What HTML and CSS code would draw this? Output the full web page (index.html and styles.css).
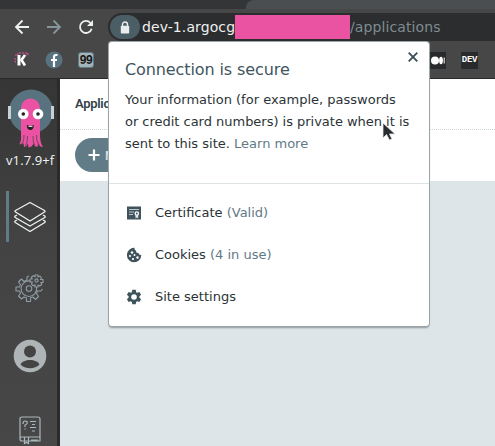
FILE: index.html
```html
<!DOCTYPE html>
<html lang="en">
<head>
<meta charset="utf-8">
<title>Applications</title>
<link rel="stylesheet" href="styles.css">
</head>
<body>
<div class="browser">
  <div class="tabs"><div class="tab-rest"></div></div>
  <header class="toolbar">
    <nav class="nav">
      <svg width="16" height="16" viewBox="0 0 16 16" class="light"><path d="M15 8H2M8.500 1.500L2 8l6.500 6.500"/></svg>
      <svg width="16" height="16" viewBox="0 0 16 16" class="dim"><path d="M1 8h13M7.500 1.500L14 8l-6.500 6.500"/></svg>
      <svg width="16" height="16" viewBox="0 0 16 16" class="light"><path d="M12.500 4A6 6 0 1 0 13.700 9.800"/><path class="solid" d="M15 1v6H9z"/></svg>
    </nav>
    <div class="omnibox">
      <span class="lock"><svg width="10" height="13" viewBox="0 0 10 13"><path d="M2.500 5V3.500a2.500 2.500 0 0 1 5 0V5" fill="none" stroke="#e9edee" stroke-width="1.400"/><rect x=".8" y="4.800" width="8.400" height="7.700" rx=".8" fill="#e9edee"/></svg></span>
      <span class="host">dev-1.argocg</span><span class="redacted"></span><span class="path">/applications</span>
    </div>
  </header>
  <div class="bookmarks">
    <svg width="16" height="16" viewBox="0 0 16 16"><path d="M1 3h3V1h10v2h-2M1 6v4h2" fill="none" stroke="#ec52a3" stroke-width="1" stroke-dasharray="2 1"/><path d="M5 3v10.500" stroke="#fff" stroke-width="3"/><path d="M11 3L7.500 8l3.500 5.500" stroke="#fff" stroke-width="2.600" fill="none"/></svg>
    <svg width="18" height="18" viewBox="0 0 18 18"><circle cx="9" cy="9" r="8.500" fill="#58737f"/><path d="M12.500 4H11Q9 4 9 6v10M6 9h6" fill="none" stroke="#fff" stroke-width="2.200"/></svg>
    <span class="badge">99</span>
    <span class="spacer"></span>
    <svg class="medium" width="16" height="17" viewBox="0 0 16 17"><path fill="#292a2b" d="M0 0h16v17H0z"/><circle cx="5" cy="8.500" r="4" fill="#fff"/><ellipse cx="11" cy="8.500" rx="1.900" ry="3.700" fill="#fff"/><path d="M14.200 5.500v6" stroke="#fff"/></svg>
    <span class="dev">DEV</span>
  </div>
</div>

<div class="app">
  <aside class="sidebar">
    <svg class="logo" width="48" height="62" viewBox="0 0 48 62">
      <circle cx="24" cy="23.500" r="22" fill="#58737f"/>
      <path d="M1 18h3v13H1zM44 18h3v13h-3z" fill="#c9d1d3"/>
      <path d="M14 21C14 7 33 7 33 21v26q0 8 3 12-4 0-5-4l-.5 4q-4-1-4-4-1 4-5 4.500l-.5-4q-1 3-4 3.500l-.5-4q-2 2-4 1 2-3 1.500-9z" fill="#ec52a3"/>
      <path d="M17 47q0 8-3 9M20.500 48q0 8-2 10M26 48q0 8 2 9M29.500 47q0 8 3 10" fill="none" stroke="#56424c" stroke-width=".8"/>
      <circle cx="16.300" cy="26" r="5.300" fill="#fff"/><circle cx="31" cy="26" r="5.300" fill="#fff"/>
      <circle cx="16.300" cy="26" r="1.800" fill="#222"/><circle cx="31" cy="26" r="1.800" fill="#222"/>
      <path d="M19.800 37q3.500 1.500 7 0 0 5-3.500 5t-3.500-5" fill="#222"/><path d="M21.500 38.300h4" stroke="#fff"/>
    </svg>
    <div class="version">v1.7.9+f</div>
    <div class="side-item active">
      <svg width="32" height="32" viewBox="0 0 32 32" fill="none" stroke="#eef2f3" stroke-width="1.300" stroke-linejoin="round"><path d="M16 1.500l14.500 8q1 1 0 1.500L16 20 1.500 11q-1-.8 0-1.500zM3 14l-1.800 1q-.7.800 0 1.500L16 25l14.800-8.500q.7-.8 0-1.500L29 14M3 19l-1.800 1q-.7.800 0 1.500L16 30.500l14.800-9q.7-.8 0-1.500L29 19"/></svg>
    </div>
    <div class="side-item gears">
      <svg width="30" height="30" viewBox="0 0 30 30" fill="none" stroke="#8f9ea4" stroke-width="1.100" stroke-linejoin="round"><path d="M14 3l-2 1v3L9 8.500 6.500 6 3.500 9l2 2.500L4.500 14H1v4h3.500l1 2.500-2 2.500 3 3L9 24l2.500 1v3.500h4V25l2.500-1 2.500 2.500 3-3-2-3 1-2.500H26l1.500-2"/><circle cx="14" cy="15.500" r="2.800"/><path d="M16 8.200a7.800 7.800 0 1 0 5.500 6"/><path d="M20 2h3v2l2-1 1.500 2-1 1.500H28v3h-2.200l1 2-2 1.500-1.800-1v2h-3v-2.200l-2 1-1.500-2 1-1.800H15v-3h2.300l-1-1.700 2-1.500 1.700 1z"/><circle cx="21.500" cy="7.500" r="1.600"/></svg>
    </div>
    <div class="side-item user">
      <svg width="34" height="34" viewBox="0 0 34 34"><circle cx="17" cy="17" r="16.300" fill="#afb5b7"/><circle cx="17" cy="12.500" r="6" fill="#444"/><path d="M7.500 25.500C10 19.500 24 19.500 26.500 25.500 22 30.500 12 30.500 7.500 25.500" fill="#444"/></svg>
    </div>
    <div class="side-item docs">
      <svg width="22" height="29" viewBox="0 0 22 29" fill="none" stroke="#aab7bc" stroke-width="1.200"><path d="M3 1h16q2 0 2 2v22H3q-2 0-2-2V3q0-2 2-2zM1 23q0-2 2-2h18M5.500 21v6.500l2-1 2 1V21M12 24h7"/><path d="M4 8q0-3 2-3 2.500 0 2.200 2Q8 8.500 6 9v2M6 12.500v1M11 5.500h6M13 8.500h3M11 11.500h6M13 15h3"/></svg>
    </div>
  </aside>
  <main class="content">
    <div class="crumb">Applic</div>
    <div class="actions"><button class="new"><svg width="12" height="12" viewBox="0 0 12 12"><path d="M6 .5v11M.5 6h11" stroke="#fff" stroke-width="2.200"/></svg><span>N</span></button></div>
  </main>
</div>

<section class="popup">
  <svg class="close" width="10" height="10" viewBox="0 0 10 10"><path d="M.7.7l8.600 8.600M9.300.7L.7 9.300" stroke="#3c5059" stroke-width="1.900"/></svg>
  <div class="summary">
    <h1>Connection is secure</h1>
    <p>Your information (for example, passwords<br><span class="tight">or credit card numbers) is private when it is</span><br>sent to this site. <a>Learn more</a></p>
  </div>
  <ul class="rows">
    <li><svg width="16" height="16" viewBox="0 0 16 16"><path d="M1 1.500h14v13H1z" fill="#3f535c"/><path d="M3 4.500h10M3 7h5M3 9.500h4" stroke="#b9c5ca" stroke-width="1"/><circle cx="10.800" cy="8.500" r="2.300" fill="#fff"/><path d="M9.500 10h2.700v3.500l-1.300-1-1.400 1z" fill="#dfe6e9"/><circle cx="10.800" cy="8.500" r="1" fill="#3f535c"/></svg><span>Certificate <em>(Valid)</em></span></li>
    <li><svg width="16" height="16" viewBox="0 0 16 16"><path d="M8.500.8A7.200 7.200 0 1 0 15.300 8q-2.500.3-2.800-2-2.800.3-2.500-2.300Q8 3 8.500.8z" fill="#3f535c"/><g fill="#fff"><circle cx="6" cy="5.500" r="1.200"/><circle cx="4" cy="9" r="1.100"/><circle cx="8.500" cy="8" r="1"/><circle cx="7" cy="12" r="1.100"/><circle cx="11.500" cy="10.500" r="1.200"/></g></svg><span>Cookies <em>(4 in use)</em></span></li>
    <li><svg width="16" height="16" viewBox="0 0 16 16"><g fill="#3f535c"><circle cx="8" cy="8" r="5.300"/><path id="tooth" d="M6.300.8h3.400l.6 3H5.700zM6.300 15.200h3.400l.6-3H5.700z"/><use href="#tooth" transform="rotate(60 8 8)"/><use href="#tooth" transform="rotate(120 8 8)"/></g><circle cx="8" cy="8" r="2.800" fill="#fff"/></svg><span>Site settings</span></li>
  </ul>
</section>
<svg class="cursor" width="14" height="20" viewBox="0 0 14 20"><path d="M1 1v15l3.500-3.500L7.500 18l2.500-1-2.500-5H13z" fill="#292c2e" stroke="#e4eaec" stroke-width=".8"/></svg>
</body>
</html>
```
FILE: styles.css
```css
* { box-sizing: border-box; }
body { margin: 0; width: 495px; height: 446px; overflow: hidden; position: relative; font-family: "DejaVu Sans", sans-serif; background: #dde5e8; }
svg { display: block; flex: none; }
.browser { height: 79px; background: #474747; border-bottom: 1px solid #2a2a2a; }
.tabs { height: 9px; background: #343536; display: flex; justify-content: flex-end; }
.tab-rest { width: 249px; background: #4b4e50; border-top-left-radius: 8px; }
.toolbar { height: 36px; display: flex; align-items: center; }
.nav { width: 108px; display: flex; gap: 16px; padding-left: 14px; }
.nav path { fill: none; stroke-width: 1.8; }
.light path { stroke: #edf1f2; }
.dim path { stroke: #87969c; }
.nav .solid { fill: #edf1f2; stroke: none; }
.omnibox { flex: 1; height: 28px; background: #2c2d2e; border-radius: 14px 0 0 14px; display: flex; align-items: center; font-size: 14px; white-space: nowrap; }
.lock { width: 30px; height: 24px; margin: 0 2px; border-radius: 12px; background: #4b5d65; display: flex; align-items: center; justify-content: center; flex: none; }
.host { width: 93px; color: #eef0f1; letter-spacing: .1px; }
.redacted { width: 115px; height: 24px; background: #ea52a2; flex: none; }
.path { color: #7f8c92; letter-spacing: .1px; }
.bookmarks { height: 32px; display: flex; align-items: center; padding: 0 17px 2px 14px; gap: 15px; }
.badge { width: 16px; height: 16px; border-radius: 3px; background: #a3b4bb; border: 1px solid #607984; color: #171717; font: bold 12px/14px "Liberation Sans", sans-serif; text-align: center; letter-spacing: -.3px; }
.spacer { flex: 1; }
.dev { width: 17px; height: 17px; background: #292a2b; color: #fff; font: bold 9px/17px "Liberation Mono", monospace; text-align: center; letter-spacing: -.3px; }
.app { display: flex; height: 367px; }
.sidebar { width: 60px; background: linear-gradient(#353536, #434343 45%, #474747); border-right: 3px solid #2b2b2b; }
.logo { margin: 9px 0 0 7px; }
.version { color: #f2f4f4; font: 13px/16px "Open Sans", sans-serif; letter-spacing: .1px; padding-left: 6px; margin-top: 2px; white-space: nowrap; }
.side-item { display: flex; justify-content: center; align-items: center; width: 60px; }
.active { height: 51px; margin-top: 23px; border-left: 3px solid #607c88; margin-left: 6px; width: 54px; padding-right: 9px; }
.gears { height: 30px; margin-top: 31px; }
.user { height: 34px; margin-top: 36px; }
.docs { height: 29px; margin-top: 43px; }
.content { flex: 1; }
.crumb { height: 51px; background: #fff; border-bottom: 1px dotted #cbd6da; padding: 16px 15px; font: 600 13px/18px Roboto, sans-serif; color: #34434a; letter-spacing: -.3px; }
.actions { height: 51px; background: #fff; padding: 8px 15px; }
.new { height: 34px; width: 60px; border: 0; border-radius: 17px; background: #617c87; color: #dce4e7; padding: 0 13px; display: flex; align-items: center; gap: 5px; font: 500 13px Roboto, sans-serif; }
.popup { position: absolute; left: 109px; top: 42px; width: 320px; height: 284px; background: #fff; border-radius: 3px; box-shadow: 0 0 0 1px #9ba4a7, 0 2px 2px #8d989c; color: #2c3336; }
.close { position: absolute; left: 299px; top: 10px; }
.summary { height: 142px; border-bottom: 1px solid #dde3e5; padding: 17px 16px 0; }
h1 { margin: 0; font-size: 16px; line-height: 22px; font-weight: 400; color: #40555e; letter-spacing: -.1px; }
p { margin: 8px 0 0; font-size: 13px; line-height: 22px; white-space: nowrap; }
.tight { letter-spacing: -.02px; }
a, em { color: #5f7a85; font-style: normal; }
.rows { list-style: none; margin: 0; padding: 8px 17px; font-size: 13px; }
.rows li { display: flex; align-items: center; height: 42px; gap: 13px; }
.rows span { padding-bottom: 2px; }
.cursor { position: absolute; left: 382px; top: 122px; }
```
